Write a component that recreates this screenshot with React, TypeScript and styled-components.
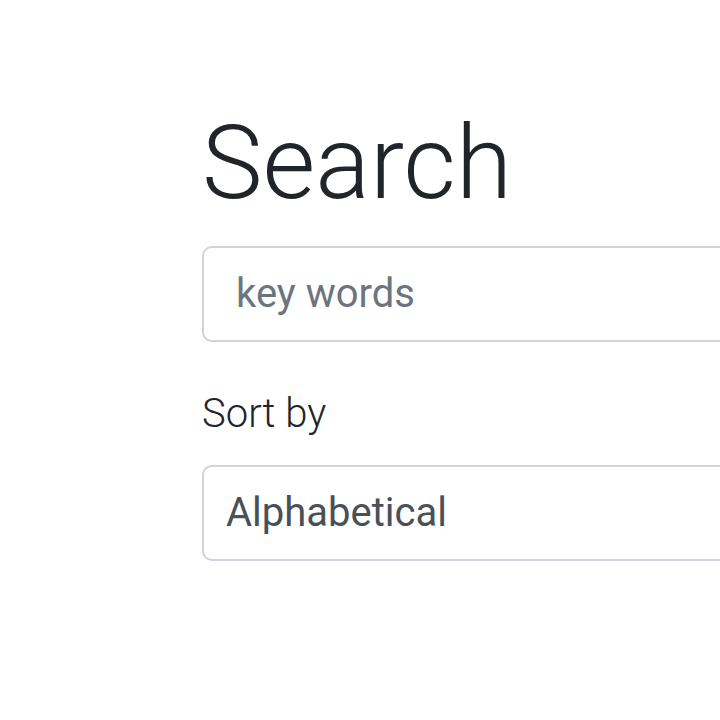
import React from "react";
import styled, { createGlobalStyle } from "styled-components";

const GlobalStyle = createGlobalStyle`
  html, body {
    margin: 0;
    padding: 0;
    overflow: hidden;
    background: #ffffff;
  }
  body {
    font-family: Roboto, "Liberation Sans", Arial, sans-serif;
    color: #212529;
  }
`;

const Page = styled.div`
  width: 720px;
  height: 720px;
  overflow: hidden;
  box-sizing: border-box;
  padding: 102px 0 0 202px;
`;

const Form = styled.form`
  display: flex;
  flex-direction: column;
  width: 1100px;
`;

const Title = styled.h1`
  margin: 0 0 21.6px;
  font-family: Roboto, "Liberation Sans", Arial, sans-serif;
  font-weight: 300;
  font-size: 102px;
  line-height: 1.2;
  color: #212529;
`;

const fieldBase = `
  box-sizing: border-box;
  width: 100%;
  height: 96px;
  margin: 0;
  border: 2px solid #ced4da;
  border-radius: 10px;
  background: #ffffff;
  font-family: Roboto, "Liberation Sans", Arial, sans-serif;
  font-size: 40px;
  line-height: 1.5;
  font-weight: 400;
  outline: none;
`;

const TextInput = styled.input`
  ${fieldBase}
  padding: 16px 32px;
  color: #495057;
  &::placeholder {
    color: #6c757d;
    opacity: 1;
  }
`;

const Label = styled.label`
  display: block;
  margin: 42px 0 21px;
  font-size: 40px;
  font-weight: 300;
  line-height: 1.5;
  color: #212529;
`;

const Select = styled.select`
  ${fieldBase}
  appearance: none;
  -webkit-appearance: none;
  padding: 16px 22px;
  color: #495057;
`;

export default function App() {
  return (
    <>
      <GlobalStyle />
      <Page>
        <Form onSubmit={(e) => e.preventDefault()}>
          <Title>Search</Title>
          <TextInput type="text" placeholder="key words" />
          <Label htmlFor="sort">Sort by</Label>
          <Select id="sort" defaultValue="alpha">
            <option value="alpha">Alphabetical</option>
            <option value="date">Date</option>
          </Select>
        </Form>
      </Page>
    </>
  );
}
